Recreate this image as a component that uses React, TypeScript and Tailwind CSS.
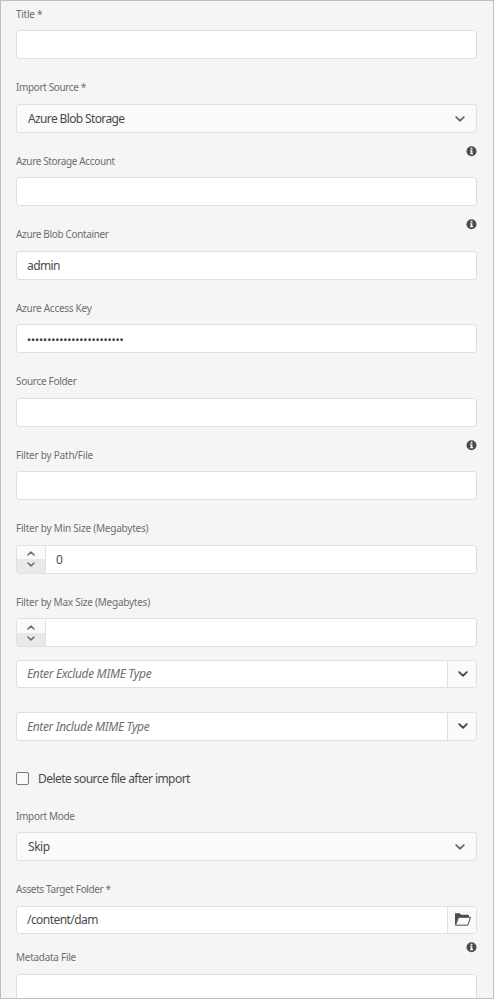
import React from "react";
import { clsx } from "clsx";

const box = "flex overflow-hidden rounded-[3px] border border-[#e0e0e0]";
const valueText = "text-[12px] leading-[16px] text-[#4b4b4b]";

function InfoIcon() {
  return (
    <svg width="11" height="11" viewBox="0 0 11 11" className="shrink-0">
      <circle cx="5.5" cy="5.2" r="5" fill="#4b4b4b" />
      <path d="M4.6 1.8h1.8v1.6H4.6zM4 4.2h2.4v2.9H7v1.1H4V7.1h.7V5.3H4z" fill="#f5f5f5" />
    </svg>
  );
}

function Chevron({ className, up }: { className: string; up?: boolean }) {
  return (
    <svg width="10" height="6" viewBox="0 0 10 6" fill="none" className={className}>
      <path
        d={up ? "M1.2 4.9 5 1.3l3.8 3.6" : "M1.2 1.1 5 4.7l3.8-3.6"}
        stroke="currentColor"
        strokeWidth="1.9"
        strokeLinecap="round"
        strokeLinejoin="round"
      />
    </svg>
  );
}

function FolderIcon() {
  return (
    <svg width="17" height="14" viewBox="0 0 17 14" className="ml-[6px] mt-[6px]">
      <path d="M1 12.5V.9Q1 .3 1.6.3h4.1l1.3 1.5h7q.9 0 .9.8v1.5H4.4z" fill="#4b4b4b" />
      <path d="M1.5 12.2 4.6 4.3h11.9l-2.7 7.9z" fill="#fafafa" stroke="#4b4b4b" strokeLinejoin="round" />
    </svg>
  );
}

function Label({ text, height, tracking, info }: { text: string; height: string; tracking: string; info?: string }) {
  return (
    <div className={clsx("flex justify-between", height)}>
      <label className={clsx("self-end whitespace-nowrap text-[10px] leading-[16px] text-[#6e6e6e]", tracking)}>
        {text}
      </label>
      {info && (
        <span className={info}>
          <InfoIcon />
        </span>
      )}
    </div>
  );
}

function TextBox({ children }: { children?: React.ReactNode }) {
  return <div className={clsx(box, "h-[29px] items-center bg-white pl-[10px]")}>{children}</div>;
}

function SelectBox({ value, tracking }: { value: string; tracking: string }) {
  return (
    <div className={clsx(box, "h-[29px] items-center justify-between bg-[#fafafa] px-[11px]")}>
      <span className={clsx(valueText, tracking)}>{value}</span>
      <Chevron className="text-[#6e6e6e]" />
    </div>
  );
}

function Stepper({ value, upper }: { value?: string; upper: string }) {
  return (
    <div className={clsx(box, "h-[29px] bg-white")}>
      <div className="flex w-[29px] flex-col border-r border-[#e0e0e0]">
        <div className={clsx("flex items-end justify-center bg-[#fafafa] pb-[3px]", upper)}>
          <Chevron up className="h-[5px] w-[8px] text-[#6e6e6e]" />
        </div>
        <div className="flex flex-1 items-start justify-center bg-[#e9e9e9] pt-[3px]">
          <Chevron className="h-[5px] w-[8px] text-[#6e6e6e]" />
        </div>
      </div>
      <span className={clsx(valueText, "self-center pl-[10px]")}>{value}</span>
    </div>
  );
}

function ButtonBox({ children, height, button }: { children: React.ReactNode; height: string; button: React.ReactNode }) {
  return (
    <div className={clsx(box, height, "bg-white")}>
      <div className="flex flex-1 items-center pl-[10px]">{children}</div>
      <div className="w-[29px] border-l border-[#e0e0e0] bg-[#fafafa]">{button}</div>
    </div>
  );
}

function Placeholder({ text, tracking }: { text: string; tracking: string }) {
  return <span className={clsx("text-[12px] italic leading-[16px] text-[#6e6e6e]", tracking)}>{text}</span>;
}

export default function App() {
  const comboChevron = <Chevron className="ml-[9.5px] mt-[10px] text-[#4b4b4b]" />;
  return (
    <div className="h-[999px] w-[494px] overflow-hidden border border-[#bfbfbf] bg-[#f5f5f5] pl-[15px] pr-[16px] font-['Noto_Sans',sans-serif]">
      <Label text="Title *" height="h-[29px] pb-[8px]" tracking="tracking-[-0.28px]" />
      <TextBox />
      <Label text="Import Source *" height="h-[45px] pb-[9px]" tracking="tracking-[-0.37px]" />
      <SelectBox value="Azure Blob Storage" tracking="tracking-[-0.63px]" />
      <Label text="Azure Storage Account" height="h-[44px] pb-[8px]" tracking="tracking-[-0.37px]" info="pt-[13px]" />
      <TextBox />
      <Label text="Azure Blob Container" height="h-[45px] pb-[9px]" tracking="tracking-[-0.35px]" info="pt-[13px]" />
      <TextBox>
        <span className={clsx(valueText, "tracking-[-0.6px]")}>admin</span>
      </TextBox>
      <Label text="Azure Access Key" height="h-[44px] pb-[8px]" tracking="tracking-[-0.28px]" />
      <TextBox>
        <span className="pt-[3px] text-[11px] leading-[16px] tracking-[-0.11px] text-[#3a3a3a]">
          ••••••••••••••••••••••••
        </span>
      </TextBox>
      <Label text="Source Folder" height="h-[45px] pb-[9px]" tracking="tracking-[-0.3px]" />
      <TextBox />
      <Label text="Filter by Path/File" height="h-[44px] pb-[8px]" tracking="tracking-[-0.22px]" info="pt-[13px]" />
      <TextBox />
      <Label text="Filter by Min Size (Megabytes)" height="h-[45px] pb-[9px]" tracking="tracking-[-0.22px]" />
      <Stepper value="0" upper="h-[13px]" />
      <Label text="Filter by Max Size (Megabytes)" height="h-[44px] pb-[8px]" tracking="tracking-[-0.24px]" />
      <Stepper upper="h-[14px]" />
      <div className="mt-[13px]">
        <ButtonBox height="h-[28px]" button={comboChevron}>
          <Placeholder text="Enter Exclude MIME Type" tracking="tracking-[-0.33px]" />
        </ButtonBox>
      </div>
      <div className="mt-[24px]">
        <ButtonBox height="h-[29px]" button={comboChevron}>
          <Placeholder text="Enter Include MIME Type" tracking="tracking-[-0.38px]" />
        </ButtonBox>
      </div>
      <div className="mt-[31px] flex h-[13px] items-center gap-[9px]">
        <span className="size-[13px] rounded-[2px] border border-[#7a7a7a] bg-[#fafafa]" />
        <span className={clsx(valueText, "tracking-[-0.55px]")}>Delete source file after import</span>
      </div>
      <Label text="Import Mode" height="h-[47px] pb-[8px]" tracking="tracking-[-0.32px]" />
      <SelectBox value="Skip" tracking="tracking-[-0.45px]" />
      <Label text="Assets Target Folder *" height="h-[45px] pb-[9px]" tracking="tracking-[-0.37px]" />
      <ButtonBox height="h-[28px]" button={<FolderIcon />}>
        <span className={clsx(valueText, "tracking-[-0.55px]")}>/content/dam</span>
      </ButtonBox>
      <Label text="Metadata File" height="h-[40px] pb-[9px]" tracking="tracking-[-0.28px]" info="pt-[8px]" />
      <TextBox />
    </div>
  );
}
